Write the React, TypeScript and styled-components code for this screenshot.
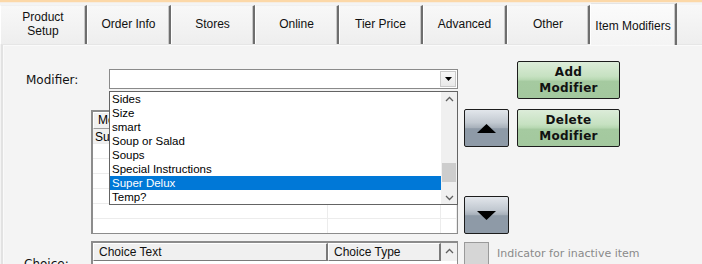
import React from "react";
import styled, { createGlobalStyle } from "styled-components";

const GlobalStyle = createGlobalStyle`
  html, body { margin: 0; padding: 0; background: #f4f4f4; overflow: hidden; }
  * { box-sizing: border-box; }
`;

const Page = styled.div`
  width: 702px;
  height: 264px;
  overflow: hidden;
  background: #f4f4f4;
  font-family: "Liberation Sans", Arial, sans-serif;
  color: #000;
`;

const TopStrip = styled.div`
  height: 3px;
  background: #fcd8a8;
  border-bottom: 1px solid #f6ede2;
`;

const TabBar = styled.div`
  display: flex;
  align-items: flex-end;
  height: 41px;
  background: #f4f4f4;
  position: relative;
  z-index: 2;
`;

const Tab = styled.div<{ $active?: boolean; $w: number }>`
  width: ${(p) => p.$w}px;
  height: ${(p) => (p.$active ? 42 : 39)}px;
  margin-bottom: ${(p) => (p.$active ? -1 : 0)}px;
  display: flex;
  align-items: center;
  justify-content: center;
  text-align: center;
  font-size: 12px;
  line-height: 14px;
  color: #111;
  background: ${(p) =>
    p.$active
      ? "linear-gradient(#fbfbfb, #f4f4f4)"
      : "linear-gradient(#f8f8f8, #eeeeee)"};
  border-left: 1px solid #ffffff;
  border-top: 1px solid ${(p) => (p.$active ? "#e4e4e4" : "#f0f0f0")};
  border-right: 2px solid #6e6e6e;
  box-shadow: inset -1px 0 0 #c8c8c8;
  padding-bottom: ${(p) => (p.$active ? 0 : 2)}px;
  padding-top: ${(p) => (p.$active ? 2 : 0)}px;
`;

const TabFill = styled.div`
  flex: 1;
  height: 39px;
  background: linear-gradient(#f8f8f8, #eeeeee);
`;

const Panel = styled.div`
  height: 220px;
  border-top: 1px solid #e6e6e6;
  border-left: 2px solid #e2e2e2;
  box-shadow: inset 1px 0 0 #fafafa, inset 0 1px 0 #fafafa;
  padding-top: 16px;
  margin-left: 1px;
`;

const Row = styled.div<{ $mt?: number; $h?: number }>`
  display: flex;
  align-items: flex-start;
  margin-top: ${(p) => p.$mt ?? 0}px;
  ${(p) => (p.$h ? `height: ${p.$h}px;` : "")}
`;

const Label = styled.div<{ $pt: number; $pl: number }>`
  width: 88px;
  flex: none;
  padding-left: ${(p) => p.$pl}px;
  padding-top: ${(p) => p.$pt}px;
  font-family: "DejaVu Sans", Verdana, sans-serif;
  font-size: 12px;
  color: #111;
`;

const ComboWrap = styled.div`
  position: relative;
  width: 349px;
  height: 20px;
  margin-left: 18px;
  margin-top: 8px;
`;

const ComboBox = styled.div`
  width: 100%;
  height: 100%;
  background: #fff;
  border: 1px solid #8a8a8a;
  display: flex;
  justify-content: flex-end;
  padding: 1px;
`;

const ComboArrow = styled.div`
  width: 16px;
  height: 100%;
  background: linear-gradient(#f7f7f7, #e9e9e9);
  border: 1px solid #c9c9c9;
  display: flex;
  align-items: center;
  justify-content: center;
`;

const DropList = styled.div`
  position: absolute;
  top: 22px;
  left: 0;
  width: 349px;
  height: 114px;
  background: #fff;
  border: 1px solid #646464;
  display: flex;
  z-index: 5;
`;

const Items = styled.div`
  flex: 1;
`;

const Item = styled.div<{ $sel?: boolean }>`
  height: 14px;
  line-height: 14px;
  font-size: 11.5px;
  padding-left: 2px;
  white-space: nowrap;
  color: ${(p) => (p.$sel ? "#fff" : "#000")};
  background: ${(p) => (p.$sel ? "#0078d7" : "transparent")};
`;

const ScrollBar = styled.div`
  width: 16px;
  background: #f0f0f0;
  display: flex;
  flex-direction: column;
  align-items: center;
  justify-content: space-between;
  padding: 4px 0 3px;
  position: relative;
`;

const Thumb = styled.div`
  position: absolute;
  left: 1px;
  right: 1px;
  top: 71px;
  height: 19px;
  background: #cdcdcd;
`;

const GridBox = styled.div`
  width: 367px;
  height: 124px;
  flex: none;
  margin-left: 88px;
  margin-top: 1px;
  background: #fff;
  border: 1px solid #8c8c8c;
  border-top-width: 2px;
  border-left-width: 2px;
  display: grid;
  grid-template-columns: 235px 113px 1fr;
  grid-template-rows: 17px;
  grid-auto-rows: 15px;
  overflow: hidden;
`;

const HeadCell = styled.div`
  background: #f0f0f0;
  border: 1px solid #9c9c9c;
  border-left-color: #fff;
  border-top-color: #fff;
  font-size: 12px;
  line-height: 15px;
  padding-left: 4px;
  white-space: nowrap;
  overflow: hidden;
`;

const Cell = styled.div<{ $grey?: boolean }>`
  border-right: 1px solid #ececec;
  border-bottom: 1px solid #ececec;
  background: ${(p) => (p.$grey ? "#f0f0f0" : "#fff")};
  font-size: 12px;
  line-height: 16px;
  padding-left: 2px;
  white-space: nowrap;
  overflow: hidden;
`;

const ArrowCol = styled.div`
  display: flex;
  flex-direction: column;
  justify-content: space-between;
  height: 125px;
  margin-left: 6px;
`;

const MoveButton = styled.div`
  width: 45px;
  height: 38px;
  border: 1px solid #1c1c1c;
  border-radius: 2px;
  background: linear-gradient(
    #e2e6eb 0%,
    #c2c9d1 35%,
    #a8b1bb 49%,
    #8e9aa7 52%,
    #8e9aa7 100%
  );
  display: flex;
  align-items: center;
  justify-content: center;
`;

const GreenButton = styled.div<{ $ml: number }>`
  width: 103px;
  height: 38px;
  flex: none;
  margin-left: ${(p) => p.$ml}px;
  border: 1px solid #1c1c1c;
  border-radius: 2px;
  background: linear-gradient(
    #dcecd9 0%,
    #c6e1c1 40%,
    #b6d7b1 50%,
    #a5caa0 53%,
    #a3c89e 100%
  );
  display: flex;
  align-items: center;
  justify-content: center;
  text-align: center;
  font-family: "DejaVu Sans", Verdana, sans-serif;
  font-weight: bold;
  font-size: 12px;
  line-height: 16px;
  color: #111;
  letter-spacing: 0.3px;
`;

const ChoiceGrid = styled.div`
  width: 367px;
  height: 40px;
  flex: none;
  background: #fff;
  border: 1px solid #8c8c8c;
  border-top-width: 2px;
  border-left-width: 2px;
  display: grid;
  grid-template-columns: 235px 113px 1fr;
  grid-template-rows: 18px;
`;

const ChoiceHead = styled.div`
  background: #f0f0f0;
  border: 1px solid #7a7a7a;
  border-left-color: #fff;
  border-top-color: #fff;
  border-right-width: 2px;
  font-size: 12px;
  line-height: 16px;
  padding-left: 5px;
  color: #111;
`;

const ChoiceScroll = styled.div`
  background: #f0f0f0;
  display: flex;
  justify-content: center;
  padding-top: 5px;
`;

const Indicator = styled.div`
  display: flex;
  align-items: center;
  margin-left: 6px;
  margin-top: 1px;
`;

const IndicatorBox = styled.div`
  width: 25px;
  height: 25px;
  background: #d6d6d6;
  border: 1px solid #9a9a9a;
`;

const IndicatorText = styled.span`
  margin-left: 8px;
  font-family: "DejaVu Sans", Verdana, sans-serif;
  font-size: 11px;
  color: #8a8a8a;
  margin-top: -2px;
`;

const Chevron = ({ up }: { up?: boolean }) => (
  <svg width="9" height="6" viewBox="0 0 9 6">
    <path
      d={up ? "M1 5 L4.5 1.5 L8 5" : "M1 1 L4.5 4.5 L8 1"}
      fill="none"
      stroke="#606060"
      strokeWidth="1.3"
    />
  </svg>
);

const Triangle = ({ up, w, h }: { up?: boolean; w: number; h: number }) => (
  <svg width={w} height={h} viewBox={`0 0 ${w} ${h}`}>
    <polygon
      points={up ? `0,${h} ${w / 2},0 ${w},${h}` : `0,0 ${w / 2},${h} ${w},0`}
      fill="#000"
    />
  </svg>
);

const tabs = [
  { label: ["Product", "Setup"], w: 87 },
  { label: ["Order Info"], w: 84 },
  { label: ["Stores"], w: 84 },
  { label: ["Online"], w: 84 },
  { label: ["Tier Price"], w: 84 },
  { label: ["Advanced"], w: 84 },
  { label: ["Other"], w: 83 },
  { label: ["Item Modifiers"], w: 87, active: true },
];

const items = [
  "Sides",
  "Size",
  "smart",
  "Soup or Salad",
  "Soups",
  "Special Instructions",
  "Super Delux",
  "Temp?",
];

export default function App() {
  const rows = Array.from({ length: 7 });
  return (
    <Page>
      <GlobalStyle />
      <TopStrip />
      <TabBar>
        {tabs.map((t) => (
          <Tab key={t.label.join(" ")} $w={t.w} $active={t.active}>
            <div>
              {t.label.map((l) => (
                <div key={l}>{l}</div>
              ))}
            </div>
          </Tab>
        ))}
        <TabFill />
      </TabBar>
      <Panel>
        <Row $h={38}>
          <Label $pt={12} $pl={23}>
            Modifier:
          </Label>
          <ComboWrap>
            <ComboBox>
              <ComboArrow>
                <Triangle w={7} h={4} />
              </ComboArrow>
            </ComboBox>
            <DropList>
              <Items>
                {items.map((it) => (
                  <Item key={it} $sel={it === "Super Delux"}>
                    {it}
                  </Item>
                ))}
              </Items>
              <ScrollBar>
                <Chevron up />
                <Thumb />
                <Chevron />
              </ScrollBar>
            </DropList>
          </ComboWrap>
          <GreenButton $ml={59}>
            Add
            <br />
            Modifier
          </GreenButton>
        </Row>
        <Row $mt={10}>
          <GridBox>
            <HeadCell>Mo</HeadCell>
            <HeadCell />
            <HeadCell />
            <Cell $grey>Su</Cell>
            <Cell />
            <Cell />
            {rows.map((_, i) => (
              <React.Fragment key={i}>
                <Cell />
                <Cell />
                <Cell />
              </React.Fragment>
            ))}
          </GridBox>
          <ArrowCol>
            <MoveButton>
              <Triangle up w={19} h={9} />
            </MoveButton>
            <MoveButton>
              <Triangle w={19} h={9} />
            </MoveButton>
          </ArrowCol>
          <GreenButton $ml={8}>
            Delete
            <br />
            Modifier
          </GreenButton>
        </Row>
        <Row $mt={7}>
          <Label $pt={16} $pl={21}>
            Choice:
          </Label>
          <ChoiceGrid>
            <ChoiceHead>Choice Text</ChoiceHead>
            <ChoiceHead>Choice Type</ChoiceHead>
            <ChoiceScroll>
              <Chevron up />
            </ChoiceScroll>
          </ChoiceGrid>
          <Indicator>
            <IndicatorBox />
            <IndicatorText>Indicator for inactive item</IndicatorText>
          </Indicator>
        </Row>
      </Panel>
    </Page>
  );
}
